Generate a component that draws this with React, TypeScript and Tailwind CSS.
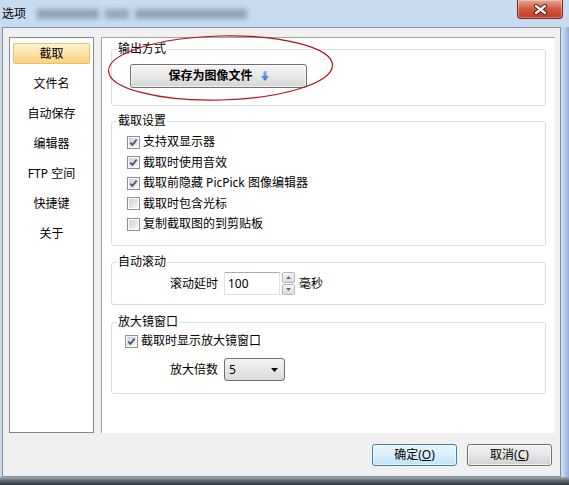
import React from "react";

const navItems = ["截取", "文件名", "自动保存", "编辑器", "FTP 空间", "快捷键", "关于"];

const captureOptions = [
  { label: "支持双显示器", checked: true },
  { label: "截取时使用音效", checked: true },
  { label: "截取前隐藏 PicPick 图像编辑器", checked: true },
  { label: "截取时包含光标", checked: false },
  { label: "复制截取图的到剪贴板", checked: false },
];

function Checkbox({ checked }: { checked: boolean }) {
  return (
    <span className="flex h-[13px] w-[13px] shrink-0 border border-[#8e8f8f] bg-white p-px">
      <span className="flex flex-1 items-center justify-center bg-gradient-to-br from-[#cdd1d6] to-[#f7f7f7]">
        {checked && (
          <svg width="9" height="9" viewBox="0 0 9 9">
            <path d="M1.3 4.6 L3.4 6.9 L7.7 1.6" fill="none" stroke="#43577f" strokeWidth="1.7" />
          </svg>
        )}
      </span>
    </span>
  );
}

function GroupBox({ title, className, children }: { title: string; className: string; children?: React.ReactNode }) {
  return (
    <div className={`relative rounded-[3px] border border-[#d5dfe5] ${className}`}>
      <span className="absolute -top-[8px] left-[5px] bg-white px-px text-[12px] leading-[14px]">{title}</span>
      {children}
    </div>
  );
}

function Spinner() {
  return (
    <div className="ml-[2px] flex h-[23px] w-[13px] flex-col gap-px">
      <div className="flex flex-1 items-center justify-center rounded-[2px] border border-[#b3b6ba] bg-gradient-to-b from-[#f7f7f7] to-[#dcdcdc]">
        <svg width="5" height="3" viewBox="0 0 5 3"><path d="M0 3 L2.5 0 L5 3 Z" fill="#5a6a80" /></svg>
      </div>
      <div className="flex flex-1 items-center justify-center rounded-[2px] border border-[#b3b6ba] bg-gradient-to-b from-[#f7f7f7] to-[#dcdcdc]">
        <svg width="5" height="3" viewBox="0 0 5 3"><path d="M0 0 L2.5 3 L5 0 Z" fill="#5a6a80" /></svg>
      </div>
    </div>
  );
}

export default function App() {
  return (
    <div className="relative flex h-[485px] w-[569px] flex-col overflow-hidden bg-gradient-to-b from-[#cadcef] to-[#a8c3df] font-['Noto_Sans','Noto_Sans_CJK_SC',sans-serif] text-[12px] text-black">
      {/* title bar */}
      <div className="flex h-[27px] shrink-0 items-start">
        <span className="ml-[2px] mt-[7px] text-[12px] leading-[14px]">选项</span>
        <div aria-hidden className="ml-[11px] mt-[9px] flex gap-[6px] blur-[2.5px]">
          <div className="h-[10px] w-[62px] bg-[#6c7f96]/60" />
          <div className="h-[10px] w-[24px] bg-[#6c7f96]/55" />
          <div className="h-[10px] w-[112px] bg-[#6c7f96]/60" />
        </div>
        <div className="ml-auto mr-[6px] flex h-[19px] w-[46px] items-center justify-center rounded-b-[4px] border border-t-0 border-[#7a2a1e] bg-gradient-to-b from-[#e9a794] via-[#d2573f] to-[#c23a22] shadow-[inset_0_0_0_1px_rgba(255,255,255,0.35)]">
          <svg width="15" height="11" viewBox="0 0 15 11">
            <path d="M3 2 L12 9 M12 2 L3 9" stroke="#4a1a10" strokeWidth="4.2" strokeLinecap="round" />
            <path d="M3 2 L12 9 M12 2 L3 9" stroke="#ffffff" strokeWidth="2.3" strokeLinecap="round" />
          </svg>
        </div>
      </div>

      <div className="flex h-[450px] shrink-0">
        <div className="w-[2px] bg-[#c9d9ea]" />
        {/* client area */}
        <div className="flex w-[559px] flex-col border border-[#7b8ea2] bg-[#f0f0f0] pl-[6px] pr-[5px] pt-[9px]">
          <div className="flex h-[396px] gap-[7px]">
            {/* sidebar */}
            <div className="flex w-[85px] flex-col gap-[9px] border border-[#828790] bg-white px-[3px] pt-[5px]">
              {navItems.map((item, i) => (
                <div
                  key={item}
                  className={`flex h-[21px] items-center justify-center text-[12px] ${
                    i === 0
                      ? "rounded-[2px] border border-[#e3c26a] bg-gradient-to-b from-[#fdf2d2] to-[#fbd27c]"
                      : ""
                  }`}
                >
                  {item}
                </div>
              ))}
            </div>

            {/* main panel */}
            <div className="flex w-[454px] flex-col border-l border-t border-[#a0a0a0] bg-white px-[9px] pt-[11px]">
              <GroupBox title="输出方式" className="h-[57px] pl-[18px] pt-[14px]">
                <button className="flex h-[24px] w-[177px] items-center justify-center gap-[8px] rounded-[3px] border border-[#707070] bg-gradient-to-b from-[#f4f4f4] via-[#e8e8e8] to-[#d4d4d4] text-[12px] font-bold shadow-[inset_0_0_0_1px_rgba(255,255,255,0.7)]">
                  <span>保存为图像文件</span>
                  <svg width="8" height="10" viewBox="0 0 8 10">
                    <defs>
                      <linearGradient id="arr" x1="0" y1="0" x2="0" y2="1">
                        <stop offset="0" stopColor="#8db6f2" />
                        <stop offset="1" stopColor="#2f6ad0" />
                      </linearGradient>
                    </defs>
                    <path d="M2.5 0 H5.5 V5 H8 L4 10 L0 5 H2.5 Z" fill="url(#arr)" />
                  </svg>
                </button>
              </GroupBox>

              <GroupBox title="截取设置" className="mt-[15px] h-[125px] pl-[15px] pt-[10px]">
                {captureOptions.map((o) => (
                  <div key={o.label} className="flex h-[20.5px] items-center gap-[3px]">
                    <Checkbox checked={o.checked} />
                    <span>{o.label}</span>
                  </div>
                ))}
              </GroupBox>

              <GroupBox title="自动滚动" className="mt-[16px] h-[43px] pl-[58px] pt-[9px]">
                <div className="flex items-center">
                  <span className="w-[48px]">滚动延时</span>
                  <div className="ml-[6px] flex h-[23px] w-[56px] items-center border border-[#e2e3ea] border-t-[#abadb3] pl-[3px]">100</div>
                  <Spinner />
                  <span className="ml-[4px]">毫秒</span>
                </div>
              </GroupBox>

              <GroupBox title="放大镜窗口" className="mt-[17px] h-[72px] pl-[13px] pt-[8px]">
                <div className="flex h-[20px] items-center gap-[3px]">
                  <Checkbox checked />
                  <span>截取时显示放大镜窗口</span>
                </div>
                <div className="ml-[45px] mt-[7px] flex items-center">
                  <span className="w-[48px]">放大倍数</span>
                  <div className="ml-[6px] flex h-[23px] w-[61px] items-center justify-between rounded-[3px] border border-[#707070] bg-gradient-to-b from-[#f3f3f3] to-[#dadada] pl-[4px] pr-[6px]">
                    <span>5</span>
                    <svg width="7" height="4" viewBox="0 0 7 4"><path d="M0 0 H7 L3.5 4 Z" fill="#000" /></svg>
                  </div>
                </div>
              </GroupBox>
            </div>
          </div>

          {/* footer */}
          <div className="mt-[11px] flex justify-end gap-[10px] pr-[3px]">
            <button className="flex h-[22px] w-[85px] items-center justify-center rounded-[3px] border border-[#3c7fb1] bg-gradient-to-b from-[#e8f5fc] via-[#d8eefb] to-[#bfe3f7] text-[12px] shadow-[inset_0_0_0_1px_rgba(255,255,255,0.6)]">
              确定(<span className="underline">O</span>)
            </button>
            <button className="flex h-[22px] w-[85px] items-center justify-center rounded-[3px] border border-[#707070] bg-gradient-to-b from-[#f2f2f2] via-[#e6e6e6] to-[#d0d0d0] text-[12px] shadow-[inset_0_0_0_1px_rgba(255,255,255,0.7)]">
              取消(<span className="underline">C</span>)
            </button>
          </div>
        </div>
        <div className="flex-1 bg-gradient-to-r from-[#d4e2f0] via-[#b5cde6] to-[#8faed0]" />
      </div>

      <div className="flex-1 bg-gradient-to-b from-[#a0abb5] via-[#5c6670] to-[#2e343a]" />

      {/* annotation ellipse */}
      <svg className="pointer-events-none absolute left-0 top-0" width="569" height="485">
        <ellipse cx="220.5" cy="68" rx="112" ry="32" fill="none" stroke="#b3121c" strokeWidth="1.2" transform="rotate(-1.5 220.5 68)" />
      </svg>
    </div>
  );
}
